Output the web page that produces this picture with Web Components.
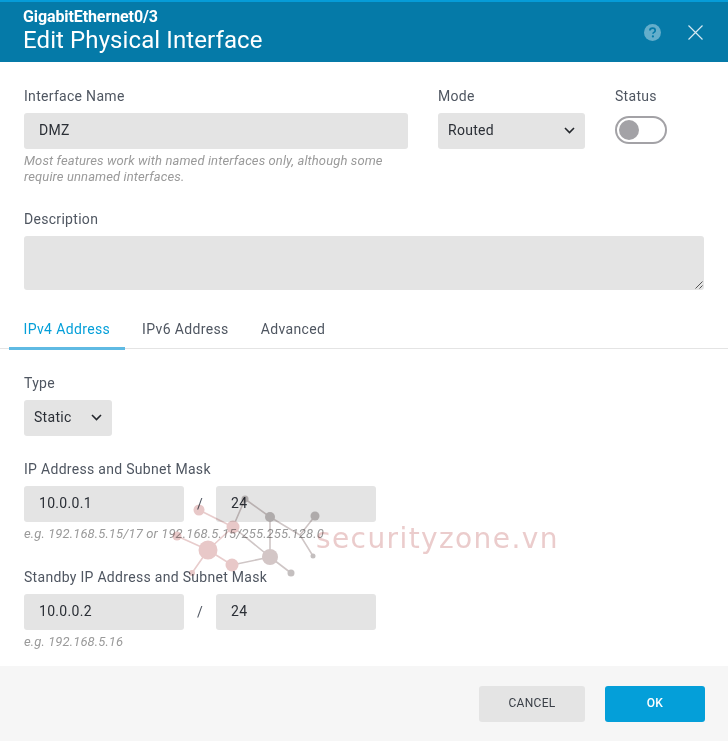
<!DOCTYPE html>
<html>
<head>
<meta charset="utf-8">
<title>Edit Physical Interface</title>
<style>
  html, body { margin: 0; padding: 0; background: #fff; }
  body { font-family: Roboto, "Liberation Sans", sans-serif; font-size: 14px; letter-spacing: .3px; color: #4f5661; }
</style>
</head>
<body>
<edit-dialog>
  <dialog-header slot="header" sub="GigabitEthernet0/3" title="Edit Physical Interface"></dialog-header>

  <div style="display:flex;gap:30px;height:88px">
    <form-field style="width:384px" label="Interface Name" hint="Most features work with named interfaces only, although some require unnamed interfaces.">
      <text-box value="DMZ"></text-box>
    </form-field>
    <form-field style="width:147px" label="Mode"><select-box value="Routed"></select-box></form-field>
    <form-field style="width:60px" label="Status"><toggle-switch></toggle-switch></form-field>
  </div>

  <form-field style="margin-top:35px" label="Description"><text-box multi></text-box></form-field>

  <tab-bar style="margin-top:24px">
    <tab-item active>IPv4 Address</tab-item>
    <tab-item>IPv6 Address</tab-item>
    <tab-item>Advanced</tab-item>
  </tab-bar>

  <form-field style="margin-top:26px;width:88px" label="Type"><select-box value="Static"></select-box></form-field>

  <form-field style="margin-top:25px" label="IP Address and Subnet Mask" hint="e.g. 192.168.5.15/17 or 192.168.5.15/255.255.128.0">
    <ip-row ip="10.0.0.1" mask="24"></ip-row>
  </form-field>

  <form-field style="margin-top:27px" label="Standby IP Address and Subnet Mask" hint="e.g. 192.168.5.16">
    <ip-row ip="10.0.0.2" mask="24"></ip-row>
  </form-field>

  <dialog-footer slot="footer">
    <action-button>CANCEL</action-button>
    <action-button primary>OK</action-button>
  </dialog-footer>

  <zone-watermark slot="overlay"></zone-watermark>
</edit-dialog>

<script>
function makeShadow(el, html) {
  el.attachShadow({ mode: "open" });
  el.shadowRoot.innerHTML = html;
}

class EditDialog extends HTMLElement {
  constructor() {
    super();
    makeShadow(this, `
    <style>
      :host { display: block; position: relative; width: 728px; height: 741px; overflow: hidden; background: #fff; }
      .wrap { display: flex; flex-direction: column; height: 100%; }
      .body { flex: 1; padding: 26px 24px 0; display: flex; flex-direction: column; }
    </style>
    <div class="wrap">
      <slot name="header"></slot>
      <div class="body"><slot></slot></div>
      <slot name="footer"></slot>
    </div>
    <slot name="overlay"></slot>`);
  }
}

class DialogHeader extends HTMLElement {
  constructor() {
    super();
    makeShadow(this, `
    <style>
      :host { display: block; }
      .bar { height: 60px; border-top: 2px solid #069cd8; background: #057aa8; color: #fff; display: flex; align-items: center; padding: 0 24px 0 23px; }
      .titles { flex: 1; }
      .sub { font-size: 16px; line-height: 18px; font-weight: 700; margin-top: -2px; letter-spacing: -.1px; }
      .main { font-size: 24px; line-height: 28px; font-weight: 400; letter-spacing: .1px; }
      .help { width: 17px; height: 17px; margin-right: 26px; display: block; }
      .close { width: 17px; height: 17px; display: block; }
    </style>
    <div class="bar">
      <div class="titles">
        <div class="sub">${this.getAttribute("sub")}</div>
        <div class="main">${this.getAttribute("title")}</div>
      </div>
      <svg class="help" viewBox="0 0 17 17">
        <circle cx="8.5" cy="8.5" r="8.5" fill="#64aecb"/>
        <path d="M5.9 6.6c0-1.5 1.1-2.4 2.7-2.4s2.6.9 2.6 2.2c0 1-.6 1.5-1.3 2-.6.4-.9.7-.9 1.4" fill="none" stroke="#057aa8" stroke-width="1.7"/>
        <circle cx="8.9" cy="12.4" r="1.1" fill="#057aa8"/>
      </svg>
      <svg class="close" viewBox="0 0 17 17">
        <path d="M1.5 1.5l14 14M15.5 1.5l-14 14" fill="none" stroke="#d5e9f2" stroke-width="1.2"/>
      </svg>
    </div>`);
    this.removeAttribute("title");
  }
}

class FormField extends HTMLElement {
  constructor() {
    super();
    const hint = this.getAttribute("hint");
    makeShadow(this, `
    <style>
      :host { display: block; }
      label { display: block; font-size: 14px; line-height: 17px; color: #4f5661; margin-bottom: 8px; }
      .hint { font-size: 13px; line-height: 16px; font-style: italic; color: #9a9a9a; margin-top: 4px; letter-spacing: .11px; }
    </style>
    <label>${this.getAttribute("label")}</label>
    <slot></slot>
    ${hint ? `<div class="hint">${hint}</div>` : ""}`);
  }
}

class TextBox extends HTMLElement {
  constructor() {
    super();
    const multi = this.hasAttribute("multi");
    makeShadow(this, `
    <style>
      :host { display: block; }
      .box { position: relative; height: ${multi ? 54 : 36}px; background: #e4e4e4; border-radius: 3px; padding: 0 15px; font-size: 14px; line-height: 34px; color: #2b2f36; box-sizing: border-box; }
      svg { position: absolute; right: 1px; bottom: 1px; width: 8px; height: 8px; }
    </style>
    <div class="box">${this.getAttribute("value") || ""}
      ${multi ? `<svg viewBox="0 0 8 8"><path d="M7.5.5l-7 7M7.5 4.5l-3 3" stroke="#555" fill="none"/></svg>` : ""}
    </div>`);
  }
}

class SelectBox extends HTMLElement {
  constructor() {
    super();
    makeShadow(this, `
    <style>
      :host { display: block; }
      .box { height: 36px; background: #e4e4e4; border-radius: 3px; display: flex; align-items: center; justify-content: space-between; padding: 0 10px 2px; box-sizing: border-box; font-size: 14px; color: #2b2f36; }
      svg { width: 11px; height: 7px; display: block; }
    </style>
    <div class="box">
      <span>${this.getAttribute("value")}</span>
      <svg viewBox="0 0 11 7"><path d="M1 1l4.5 4.5L10 1" fill="none" stroke="#24272c" stroke-width="1.6"/></svg>
    </div>`);
  }
}

class ToggleSwitch extends HTMLElement {
  constructor() {
    super();
    makeShadow(this, `
    <style>
      :host { display: block; padding-top: 3px; }
      .track { width: 52px; height: 28px; box-sizing: border-box; border: 2px solid #a3a2a6; border-radius: 14px; background: #fff; display: flex; align-items: center; padding-left: 2px; }
      .knob { width: 20px; height: 20px; border-radius: 50%; background: #a3a2a6; }
    </style>
    <div class="track"><div class="knob"></div></div>`);
  }
}

class TabBar extends HTMLElement {
  constructor() {
    super();
    makeShadow(this, `
    <style>
      :host { display: block; margin-left: -24px; margin-right: -24px; }
      .bar { display: flex; padding-left: 9px; border-bottom: 1px solid #e4e4e4; height: 34px; }
    </style>
    <div class="bar"><slot></slot></div>`);
  }
}

class TabItem extends HTMLElement {
  constructor() {
    super();
    makeShadow(this, `
    <style>
      :host { display: block; padding: 0 14.5px; height: 36px; box-sizing: border-box; font-size: 14px; line-height: 30px; letter-spacing: .36px; color: #4f5661; margin-right: 3px; }
      :host([active]) { color: #049fd9; border-bottom: 3px solid #5fbae3; }
    </style>
    <slot></slot>`);
  }
}

class IpRow extends HTMLElement {
  constructor() {
    super();
    makeShadow(this, `
    <style>
      :host { display: block; }
      .row { display: flex; width: 352px; align-items: center; }
      text-box { width: 160px; }
      .slash { width: 32px; text-align: center; font-size: 14px; color: #4f5661; }
    </style>
    <div class="row">
      <text-box value="${this.getAttribute("ip")}"></text-box>
      <span class="slash">/</span>
      <text-box value="${this.getAttribute("mask")}"></text-box>
    </div>`);
  }
}

class DialogFooter extends HTMLElement {
  constructor() {
    super();
    makeShadow(this, `
    <style>
      :host { display: block; }
      .foot { height: 75px; box-sizing: border-box; background: #f6f6f6; display: flex; justify-content: flex-end; gap: 20px; padding: 20px 23px 0 0; }
    </style>
    <div class="foot"><slot></slot></div>`);
  }
}

class ActionButton extends HTMLElement {
  constructor() {
    super();
    makeShadow(this, `
    <style>
      :host { display: block; width: 106px; height: 36px; border-radius: 3px; background: #e4e4e4; color: #3a3f47; font-size: 12px; line-height: 34px; text-align: center; }
      :host([primary]) { width: 100px; background: #049fd9; color: #fff; font-weight: 500; }
    </style>
    <slot></slot>`);
  }
}

class ZoneWatermark extends HTMLElement {
  constructor() {
    super();
    makeShadow(this, `
    <style>
      :host { display: block; position: absolute; left: 165px; top: 490px; width: 400px; height: 90px; pointer-events: none; mix-blend-mode: multiply; }
      svg { display: block; }
      text { font-family: "DejaVu Sans", sans-serif; font-size: 28px; fill: #ebcccc; letter-spacing: 1.4px; }
    </style>
    <svg width="400" height="90" viewBox="165 490 400 90">
      <g stroke="#e8cccc" stroke-width="1.6" fill="none">
        <path d="M199 510l34 17M208 550l25-23M208 550l24 15M208 550l-31-14M208 550l-16 23"/>
      </g>
      <g stroke="#cfc6c6" stroke-width="1.6" fill="none">
        <path d="M233 527l12-28M233 527l37 30M232 565l38-8M245 499l25 18 30 18 13 21M270 517v40M270 557l21 16M300 535l15-19"/>
      </g>
      <g fill="#e8c8c8">
        <circle cx="199" cy="510" r="5.5"/><circle cx="177" cy="536" r="4.5"/><circle cx="208" cy="550" r="9.5"/>
        <circle cx="233" cy="527" r="6.5"/><circle cx="232" cy="565" r="6.5"/><circle cx="192" cy="573" r="3"/>
      </g>
      <g fill="#c4bfbf">
        <circle cx="245" cy="499" r="3.5"/><circle cx="270" cy="517" r="5"/><circle cx="315" cy="516" r="4.5"/><circle cx="313" cy="556" r="2.5"/><circle cx="291" cy="573" r="3.5"/>
      </g>
      <circle cx="270" cy="557" r="8" fill="#d3c6c6"/>
      <text x="316" y="548">securityzone.vn</text>
    </svg>`);
  }
}

customElements.define("text-box", TextBox);
customElements.define("edit-dialog", EditDialog);
customElements.define("dialog-header", DialogHeader);
customElements.define("form-field", FormField);
customElements.define("select-box", SelectBox);
customElements.define("toggle-switch", ToggleSwitch);
customElements.define("tab-bar", TabBar);
customElements.define("tab-item", TabItem);
customElements.define("ip-row", IpRow);
customElements.define("dialog-footer", DialogFooter);
customElements.define("action-button", ActionButton);
customElements.define("zone-watermark", ZoneWatermark);
</script>
</body>
</html>
